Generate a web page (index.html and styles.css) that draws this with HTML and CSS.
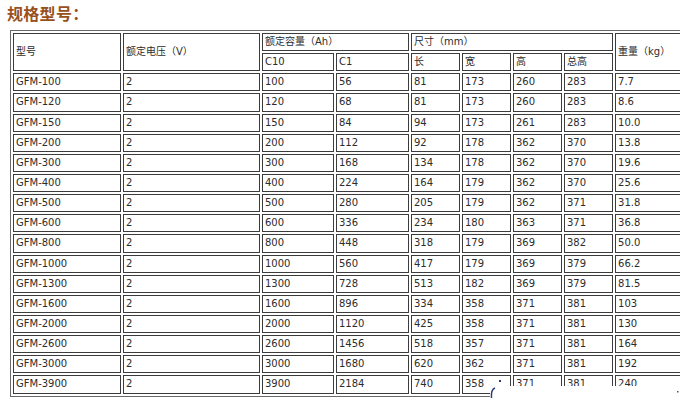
FILE: index.html
```html
<!DOCTYPE html>
<html lang="zh">
<head>
<meta charset="utf-8">
<title>规格型号</title>
<link rel="stylesheet" href="styles.css">
</head>
<body>
<div class="page">
  <h2 class="title">规格型号：</h2>
  <table class="spec">
    <colgroup>
      <col class="w-model"><col class="w-volt"><col class="w-c10"><col class="w-c1">
      <col class="w-dim"><col class="w-dim"><col class="w-dim"><col class="w-dim">
      <col class="w-kg">
    </colgroup>
    <tr><td rowspan="2">型号</td><td rowspan="2">额定电压（V）</td><td colspan="2">额定容量（Ah）</td><td colspan="4">尺寸（mm）</td><td rowspan="2">重量（kg）</td></tr>
    <tr><td>C10</td><td>C1</td><td>长</td><td>宽</td><td>高</td><td>总高</td></tr>
    <tr><td>GFM-100</td><td>2</td><td>100</td><td>56</td><td>81</td><td>173</td><td>260</td><td>283</td><td>7.7</td></tr>
    <tr><td>GFM-120</td><td>2</td><td>120</td><td>68</td><td>81</td><td>173</td><td>260</td><td>283</td><td>8.6</td></tr>
    <tr><td>GFM-150</td><td>2</td><td>150</td><td>84</td><td>94</td><td>173</td><td>261</td><td>283</td><td>10.0</td></tr>
    <tr><td>GFM-200</td><td>2</td><td>200</td><td>112</td><td>92</td><td>178</td><td>362</td><td>370</td><td>13.8</td></tr>
    <tr><td>GFM-300</td><td>2</td><td>300</td><td>168</td><td>134</td><td>178</td><td>362</td><td>370</td><td>19.6</td></tr>
    <tr><td>GFM-400</td><td>2</td><td>400</td><td>224</td><td>164</td><td>179</td><td>362</td><td>370</td><td>25.6</td></tr>
    <tr><td>GFM-500</td><td>2</td><td>500</td><td>280</td><td>205</td><td>179</td><td>362</td><td>371</td><td>31.8</td></tr>
    <tr><td>GFM-600</td><td>2</td><td>600</td><td>336</td><td>234</td><td>180</td><td>363</td><td>371</td><td>36.8</td></tr>
    <tr><td>GFM-800</td><td>2</td><td>800</td><td>448</td><td>318</td><td>179</td><td>369</td><td>382</td><td>50.0</td></tr>
    <tr><td>GFM-1000</td><td>2</td><td>1000</td><td>560</td><td>417</td><td>179</td><td>369</td><td>379</td><td>66.2</td></tr>
    <tr><td>GFM-1300</td><td>2</td><td>1300</td><td>728</td><td>513</td><td>182</td><td>369</td><td>379</td><td>81.5</td></tr>
    <tr><td>GFM-1600</td><td>2</td><td>1600</td><td>896</td><td>334</td><td>358</td><td>371</td><td>381</td><td>103</td></tr>
    <tr><td>GFM-2000</td><td>2</td><td>2000</td><td>1120</td><td>425</td><td>358</td><td>371</td><td>381</td><td>130</td></tr>
    <tr><td>GFM-2600</td><td>2</td><td>2600</td><td>1456</td><td>518</td><td>357</td><td>371</td><td>381</td><td>164</td></tr>
    <tr><td>GFM-3000</td><td>2</td><td>3000</td><td>1680</td><td>620</td><td>362</td><td>371</td><td>381</td><td>192</td></tr>
    <tr><td>GFM-3900</td><td>2</td><td>3900</td><td>2184</td><td>740</td><td>358</td><td>371</td><td>381</td><td>240</td></tr>
  </table>
  <div class="overlay">
    <svg class="overlay-mark" width="190" height="16" viewBox="0 0 190 16">
      <path d="M5 2 C2 3 1 6 1.5 12" fill="none" stroke="#2a3a7a" stroke-width="1.4"/>
      <rect x="187" y="5" width="1.5" height="1.5" fill="#555"/>
    </svg>
  </div>
  <span class="dot"></span>
</div>
</body>
</html>
```
FILE: styles.css
```css
html, body {
  margin: 0;
  padding: 0;
  background: #ffffff;
  overflow: hidden;
}
.page {
  position: relative;
  width: 680px;
  height: 402px;
  overflow: hidden;
}
.title {
  margin: 0;
  padding: 3px 0 0 7px;
  height: 23px;
  font-family: "Noto Sans CJK SC", sans-serif;
  font-size: 16px;
  line-height: 20px;
  font-weight: bold;
  color: #97511f;
  letter-spacing: 0.3px;
}
.spec {
  margin: 4px 0 0 10px;
  table-layout: fixed;
  width: 688px;
  border-collapse: separate;
  border-spacing: 2px;
  border: 1px solid #6a6a6a;
  font-family: "DejaVu Sans", "Noto Sans CJK SC", sans-serif;
  font-size: 10px;
  color: #2c2c2c;
}
.spec td {
  border: 1px solid #3c3c3c;
  padding: 1px 2px;
  height: 14.14px;
  line-height: 14.14px;
  white-space: nowrap;
  overflow: hidden;
  text-align: left;
  vertical-align: middle;
}
.w-model { width: 108px; }
.w-volt { width: 137px; }
.w-c10 { width: 72px; }
.w-c1 { width: 73px; }
.w-dim { width: 49px; }
.w-kg { width: 80px; }
.overlay {
  position: absolute;
  left: 490px;
  top: 386px;
  width: 190px;
  height: 16px;
  background: #ffffff;
}
.overlay-mark {
  position: absolute;
  left: 0;
  top: 0;
}
.dot {
  position: absolute;
  left: 499px;
  top: 380px;
  width: 2px;
  height: 2px;
  background: #2a3a7a;
}
```
